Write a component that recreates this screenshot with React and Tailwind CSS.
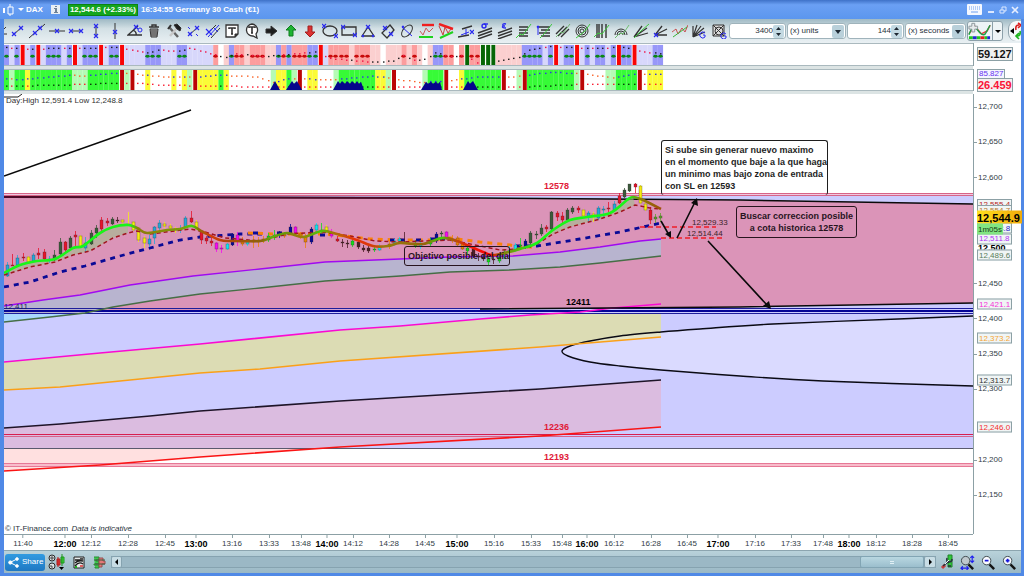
import clsx from 'clsx'

const PLOT = { x: 4, y: 94, w: 969, h: 440 }
const BAR = 5.23

const cellColors = {
  b: '#9797f9',
  l: '#d7d7fb',
  s: '#fc9d9d',
  p: '#fbcfcf',
  w: '#ffffff',
  r: '#f80505',
  g: '#056605',
}

const trendColors = {
  g: '#37fb37',
  l: '#b5fbb5',
  y: '#fbfb37',
  w: '#ffffff',
  r: '#bb0505',
}

const momentumCells =
  'blbrlbrlbbblbrlbbbrlbbr' +
  'llllbbblllbblllll' +
  'swpbsspsssppbsbsssbbrl' +
  'sssspsssppwpppspspwpbb' +
  'sswsgssgggppppp' +
  'bbbblbrlbbrlblbblbrbbrlllbb'

const trendCells =
  'glggyggggggggglllggggggr'.replace('ggggggggglll', 'gggggggglll') +
  'lrwwywwwwywylryyyygy' +
  'wwwwwwwwlyyglrwyywwwl' +
  'gggggggyylrwwwwwlgggrwwy' +
  'gggggggrwwlrggggggggglr' +
  'wwwwllggggrwyyy'

const momentumDots = [[0, 46], [3, 48], [22, 46], [23, 48], [27, 52], [29, 49], [33, 50], [35, 47], [40, 54], [42, 57], [44, 53], [50, 56], [59, 51], [62, 58], [66, 60], [70, 62], [74, 61], [76, 55], [78, 60], [80, 59], [82, 52], [85, 56], [88, 55], [90, 63], [94, 61], [98, 57], [100, 49], [104, 45], [112, 47], [118, 46], [121, 50], [125, 53]]
const trendTopDots = [[0, 78], [3, 79], [6, 77], [12, 74], [15, 75], [20, 72], [23, 72], [27, 74], [30, 76], [36, 76], [41, 74], [48, 76], [51, 82], [54, 78], [63, 79], [70, 75], [73, 77], [79, 82], [85, 80], [90, 76], [97, 76], [104, 71], [110, 72], [116, 77], [120, 73], [125, 73]]
const trendLowDots = [[0, 86], [10, 85], [20, 83], [25, 83], [30, 85], [50, 87], [70, 87], [99, 87], [110, 84], [125, 84]]

const upper = [[4, 306], [43, 300], [80, 295], [110, 289], [130, 285], [193, 276], [260, 269], [325, 262], [400, 259], [450, 257], [513, 256], [560, 252], [600, 247], [640, 241], [661, 239]]
const lower = [[4, 322], [50, 317], [85, 313], [113, 307], [150, 301], [200, 294], [260, 288], [325, 281], [400, 276], [450, 272], [510, 270], [560, 267], [600, 263], [661, 256]]
const magenta = [[4, 362], [100, 353], [200, 344], [340, 330], [400, 326], [480, 319], [530, 315], [580, 312], [613, 308], [661, 304]]
const orange = [[4, 390], [60, 387], [130, 380], [200, 373], [260, 369], [340, 361], [540, 347], [661, 337]]
const black = [[4, 428], [60, 424], [150, 416], [200, 411], [340, 401], [540, 389], [661, 380]]
const red = [[4, 471], [100, 465], [200, 457], [340, 447], [540, 436], [661, 427]]
const cone = [[973, 316], [898, 319], [773, 324], [700, 329], [661, 332], [620, 336], [590, 341], [570, 346], [562, 351], [568, 356], [590, 362], [620, 366], [661, 370], [740, 376], [823, 381], [973, 386]]

const average = [[4, 273], [20, 265], [37, 261], [55, 259], [73, 248], [83, 246], [100, 233], [113, 227], [128, 225], [137, 228], [147, 233], [167, 230], [180, 229], [192, 226], [203, 232], [220, 240], [233, 241], [260, 241], [270, 238], [287, 233], [303, 237], [322, 231], [337, 234], [357, 240], [373, 246], [388, 246], [400, 243], [423, 244], [442, 238], [457, 241], [483, 252], [495, 255], [523, 248], [537, 243], [553, 230], [570, 220], [587, 217], [610, 213], [627, 200], [633, 197], [643, 200], [661, 209]]
const averageStops = [[4, '#19f519'], [130, '#19f519'], [138, '#8c7d0a'], [182, '#7d9b0a'], [192, '#3cd70a'], [199, '#8c6e0a'], [210, '#d73c0a'], [225, '#b4460a'], [262, '#8c640a'], [272, '#5fb40a'], [284, '#64960a'], [300, '#a0780a'], [320, '#46c80a'], [332, '#a0780a'], [355, '#eb320a'], [372, '#d73c0a'], [385, '#967d0a'], [425, '#96640a'], [441, '#3cd70a'], [450, '#a0640a'], [468, '#eb1e0a'], [490, '#ff0000'], [500, '#966e0a'], [525, '#3cd70a'], [535, '#19f519'], [628, '#19f519'], [640, '#8c7d0a'], [661, '#a0500a']]
const signal = [[4, 275], [30, 267], [55, 262], [73, 255], [90, 251], [113, 238], [128, 233], [137, 231], [150, 234], [190, 229], [205, 232], [225, 238], [260, 241], [287, 234], [322, 232], [350, 236], [375, 241], [400, 242], [450, 240], [480, 246], [500, 250], [520, 249], [537, 244], [553, 234], [570, 227], [600, 219], [620, 212], [635, 205], [650, 208], [661, 209]]

const K = '#3c5a3c'
const R = '#e6142d'
const Y = '#f5eb14'
const B = '#28a5d7'
const N = '#0a0a96'
const M = '#f50af0'
const C = '#14e1f0'
const O = '#eb820a'
const G = '#14dc1e'
const D = '#501e28'

// x, high, low, body top, body bottom, colour
const candles = [
  [7, 262, 277, 265, 276, B], [12, 254, 266, 265, 266, R], [17, 255, 266, 258, 265, B], [23, 253, 261, 257, 258, R], [28, 256, 263, 257, 262, Y], [33, 253, 262, 255, 261, B], [38, 248, 259, 253, 255, R], [44, 249, 261, 252, 259, R], [49, 256, 263, 259, 260, B], [54, 250, 261, 255, 260, K], [60, 238, 255, 242, 254, K], [65, 241, 254, 242, 250, R], [70, 236, 249, 238, 248, K], [75, 231, 247, 235, 237, R], [80, 235, 248, 236, 247, Y], [85, 237, 252, 243, 248, B], [91, 230, 245, 233, 244, K], [96, 225, 238, 228, 233, K], [101, 217, 231, 220, 229, R], [107, 218, 226, 221, 223, R], [112, 217, 225, 219, 224, K], [117, 217, 223, 220, 221, D], [122, 219, 224, 220, 222, Y], [128, 212, 226, 224, 225, Y], [133, 221, 231, 222, 230, Y], [138, 227, 242, 228, 240, Y], [144, 236, 248, 238, 243, Y], [149, 235, 247, 239, 244, B], [154, 226, 244, 227, 238, B], [159, 220, 230, 223, 228, B], [164, 222, 228, 224, 226, Y], [170, 224, 230, 226, 228, Y], [175, 227, 233, 229, 230, Y], [180, 225, 233, 229, 230, B], [185, 216, 228, 218, 227, B], [191, 211, 223, 218, 222, R], [196, 220, 230, 222, 228, Y], [201, 230, 244, 231, 240, R], [206, 236, 244, 238, 241, R], [211, 238, 246, 241, 243, R], [216, 242, 252, 243, 249, M], [221, 245, 253, 248, 249, M], [227, 243, 250, 244, 249, C], [232, 233, 246, 234, 245, N], [237, 232, 246, 235, 241, M], [242, 237, 246, 240, 244, O], [247, 240, 246, 242, 244, C], [253, 236, 248, 240, 242, O], [258, 237, 247, 240, 242, O],
  [263, 236, 243, 239, 240, O], [268, 233, 242, 236, 240, G], [274, 230, 240, 235, 236, G], [279, 231, 238, 232, 234, N], [284, 232, 238, 234, 236, O], [290, 224, 234, 227, 233, N], [295, 226, 234, 227, 233, M], [300, 232, 239, 234, 237, O], [305, 234, 248, 237, 242, O], [311, 227, 244, 229, 242, N], [316, 223, 231, 225, 230, C], [321, 223, 233, 230, 231, G], [326, 225, 233, 227, 231, Y], [331, 229, 238, 233, 236, M], [337, 236, 242, 239, 241, R], [342, 239, 247, 242, 243, D], [347, 240, 248, 243, 244, D], [352, 238, 247, 241, 245, G], [358, 240, 249, 242, 247, D], [363, 245, 252, 248, 250, D], [368, 246, 253, 248, 251, D], [374, 246, 252, 249, 250, G], [379, 244, 251, 247, 250, C], [389, 241, 249, 244, 245, O], [394, 239, 246, 241, 244, C], [399, 237, 244, 239, 241, C], [404, 232, 244, 242, 243, D], [415, 240, 248, 243, 246, G], [420, 240, 249, 244, 246, C], [430, 238, 246, 241, 244, G], [436, 232, 243, 234, 241, N], [441, 231, 240, 233, 234, K], [446, 231, 240, 232, 238, M], [452, 235, 243, 239, 241, O], [457, 236, 246, 238, 245, O], [462, 242, 250, 243, 249, O], [467, 244, 254, 248, 251, G], [473, 247, 258, 249, 256, D], [478, 253, 261, 256, 257, D], [483, 254, 261, 257, 259, D], [488, 256, 265, 259, 262, G], [493, 254, 264, 259, 260, D], [499, 253, 263, 257, 261, G],
  [504, 249, 259, 252, 254, G], [509, 246, 256, 250, 252, C], [515, 243, 252, 245, 250, C], [520, 238, 250, 245, 246, G], [525, 239, 249, 241, 247, N], [530, 231, 245, 233, 243, K], [536, 231, 239, 234, 235, K], [541, 224, 236, 228, 234, K], [546, 225, 232, 227, 229, R], [551, 211, 230, 212, 229, K], [557, 211, 221, 213, 217, R], [562, 212, 225, 216, 220, R], [567, 208, 222, 210, 220, K], [572, 206, 214, 208, 212, K], [578, 206, 213, 208, 210, R], [583, 209, 218, 210, 216, Y], [588, 211, 222, 213, 217, B], [593, 212, 222, 214, 216, Y], [598, 206, 220, 208, 218, B], [603, 206, 217, 209, 210, B], [608, 202, 212, 208, 209, R], [614, 201, 212, 204, 210, B], [619, 193, 204, 196, 203, R], [624, 188, 198, 190, 197, K], [629, 184, 192, 184, 191, K], [635, 183, 193, 184, 187, R], [640, 185, 204, 186, 203, Y], [645, 202, 211, 204, 210, Y], [650, 207, 224, 210, 220, R], [655, 214, 223, 217, 219, '#5fa02d'], [660, 213, 222, 216, 218, '#5fa02d'],
]

const priceTicks = [12700, 12650, 12600, 12450, 12400, 12350, 12300, 12200, 12150]

const priceTags = [
  { y: 228, text: '12,528.8', color: 'text-[#1e1ec8]' },
  { y: 239, text: '12,511.8', color: 'text-[#b432f5]' },
  { y: 255, text: '12,489.6', color: 'text-[#5a7d5a]' },
  { y: 304, text: '12,421.1', color: 'text-[#f532d7]' },
  { y: 338, text: '12,373.2', color: 'text-[#f5a532]' },
  { y: 380, text: '12,313.7', color: 'text-[#323232]' },
  { y: 427, text: '12,246.0', color: 'text-[#f52d2d]' },
]

const timeTicks = [
  [23, '11:40'], [65, '12:00', true], [91, '12:12'], [128, '12:28'], [165, '12:45'], [196, '13:00', true], [232, '13:16'], [269, '13:33'], [301, '13:48'], [327, '14:00', true], [353, '14:12'], [389, '14:28'], [425, '14:45'], [457, '15:00', true], [494, '15:16'], [531, '15:33'], [562, '15:48'], [587, '16:00', true], [614, '16:12'], [651, '16:28'], [687, '16:45'], [718, '17:00', true], [755, '17:16'], [791, '17:33'], [823, '17:48'], [849, '18:00', true], [876, '18:12'], [912, '18:28'], [948, '18:45'],
]

function line(points) {
  return 'M' + points.map((p) => p.join(' ')).join('L')
}

function band(top, bottom) {
  return line([...top, ...[...bottom].reverse()]) + 'Z'
}

function smooth(points) {
  let d = `M${points[0][0]} ${points[0][1]}`
  for (let i = 0; i < points.length - 1; i++) {
    const a = points[i - 1] || points[i]
    const b = points[i]
    const c = points[i + 1]
    const e = points[i + 2] || c
    d += `C${b[0] + (c[0] - a[0]) / 6} ${b[1] + (c[1] - a[1]) / 6} ${c[0] - (e[0] - b[0]) / 6} ${c[1] - (e[1] - b[1]) / 6} ${c[0]} ${c[1]}`
  }
  return d
}

function valueAt(points, i) {
  const next = points.findIndex((p) => p[0] >= i)
  if (next <= 0) return points[0][1]
  const [x0, y0] = points[next - 1]
  const [x1, y1] = points[next]
  return Math.round(y0 + ((y1 - y0) * (i - x0)) / (x1 - x0))
}

function left(x) {
  return `${((x - PLOT.x) / PLOT.w) * 100}%`
}

function top(y) {
  return `${((y - PLOT.y) / PLOT.h) * 100}%`
}

function priceY(price) {
  return 107 + ((12700 - price) * 35.3) / 50
}

const Cross = ({ x, y, s = 2 }) => (
  <path d={`M${x - s} ${y - s}l${s * 2} ${s * 2}M${x - s} ${y + s}l${s * 2} ${-s * 2}`} stroke="#2a2af0" strokeWidth="1.2" />
)

const tools = [
  ['Segment', <><path d="M3 12L12 4" /><Cross x={4} y={11} /><Cross x={11} y={5} /></>],
  ['Line', <><path d="M0 15L16 1" /><Cross x={6} y={10} /><Cross x={11} y={5} /></>],
  ['Horizontal line', <><path d="M0 8H16" /><Cross x={8} y={8} /></>],
  ['Horizontal segment', <><path d="M3 8H13" /><Cross x={3} y={8} /><Cross x={13} y={8} /></>],
  ['Vertical segment', <><path d="M8 3V13" /><Cross x={8} y={3} /><Cross x={8} y={13} /></>],
  ['Vertical line', <><path d="M8 0V16" /><Cross x={8} y={9} /></>],
  ['Angle', <><path d="M11 3L1 12H15M6 7Q10 9 9 12" strokeWidth="1.3" /><Cross x={9} y={4} /><circle cx="13" cy="7" r="2" stroke="#2a2af0" /></>],
  ['Delete', <><path d="M3 4h10M6 4V2h4v2" strokeWidth="1.4" /><path d="M4 6l1 8h6l1-8z" fill="#b4b4b4" /><path d="M6 7v6M8 7v6M10 7v6" /></>],
  ['Settings', <><path d="M3 4l9 10" stroke="#646464" strokeWidth="2.5" /><path d="M12 4L4 13" stroke="#c8c8c8" strokeWidth="2.5" /><path d="M8 2l3-1 4 4-1 3-3-2z" fill="#1e1e1e" /><path d="M2 6l3-4" strokeWidth="2" /></>],
  ['Trend', <><path d="M4 12L12 5" /><path d="M3 4l2 2M11 11l2 2" stroke="#2a2af0" /><Cross x={5} y={11} /><Cross x={12} y={5} /></>],
  ['Channel', <><path d="M1 12L11 2M6 15L15 5" /><Cross x={4} y={9} s={3} /><path d="M3 14L14 2M9 5l4 4" stroke="#2a2af0" /></>],
  ['Text', <><path d="M2 2h12v9l-3 3H2z" fill="#fff" strokeWidth="1.3" /><path d="M14 11h-3v3z" fill="#333" /><path d="M5 6V5h6v1M8 5v6M7 11h2" strokeWidth="1.6" /></>],
  ['Callout', <><path d="M8 1a6 6 0 1 0 1 12l4 2-1-4A6 6 0 0 0 8 1z" fill="#fff" strokeWidth="1.3" /><path d="M5 5V4h6v1M8 4v6M7 10h2" strokeWidth="1.6" /></>],
  ['Right arrow', <path d="M3 6h5V3l6 5-6 5v-3H3z" fill="#1e1e1e" />],
  ['Up arrow', <path d="M8 2l5 5h-3v6H6V7H3z" fill="#1eb432" stroke="#0f7d1e" />],
  ['Down arrow', <path d="M8 14l5-5h-3V3H6v6H3z" fill="#dc3232" stroke="#a01e1e" />],
  ['Ellipse', <><ellipse cx="8" cy="8" rx="7" ry="5" strokeWidth="1.3" /><Cross x={2} y={3} /><Cross x={14} y={13} /></>],
  ['Rectangle', <><path d="M1 4H15V12H1z" strokeWidth="1.3" /><Cross x={2} y={4} /><Cross x={14} y={12} /></>],
  ['Triangle', <><path d="M8 4L2 13H14z" strokeWidth="1.3" /><Cross x={8} y={4} /><Cross x={3} y={13} s={1} /><Cross x={13} y={13} s={1} /></>],
  ['Tilted rectangle', <><path d="M10 2l4 5-7 8-5-5z" strokeWidth="1.3" /><Cross x={5} y={5} /><Cross x={11} y={11} /></>],
  ['Tilted ellipse', <><ellipse cx="8" cy="8" rx="7" ry="4" transform="rotate(-50 8 8)" /><path d="M3 4l10 9" stroke="#2a2af0" /><Cross x={4} y={4} s={1} /></>],
  ['Support and resistance', <><path d="M3 2H15" stroke="#f01e1e" strokeWidth="2.4" /><path d="M0 14H14" stroke="#1ed21e" strokeWidth="2" /><path d="M1 8l3 4 3-7 3 4 4-4" stroke="#c85a5a" /></>],
  ['Auto channel', <><path d="M1 1L15 6" stroke="#f01e1e" strokeWidth="2.4" /><path d="M2 15L15 9" stroke="#1ed21e" strokeWidth="2" /><path d="M1 3l4 9 2-8 3 6 3-4" stroke="#c83c3c" /></>],
  ['Fork', <><path d="M4 6L14 3M0 14L11 12" strokeWidth="1.4" /><path d="M8 6v6M3 12l8-3" stroke="#2a2af0" /><Cross x={14} y={9} /></>],
  ['Standard deviation', <><path d="M1 10L15 5M1 13L15 8M1 16L15 11" strokeWidth="1.4" /><circle cx="7" cy="3" r="2" stroke="#2a2af0" strokeWidth="1.4" /><path d="M7 1h4" stroke="#2a2af0" strokeWidth="1.4" /></>],
  ['Standard error', <><path d="M1 10L15 5M1 13L15 8M1 16L15 11" strokeWidth="1.4" /><path d="M9 1Q5 0 6 3Q4 5 9 5M6 3h2" stroke="#2a2af0" strokeWidth="1.3" /></>],
  ['Fibonacci retracement', <><path d="M3 4H12M3 7H12M3 10H12M3 13H12" strokeWidth="1.4" /><path d="M0 15l4-4 3 1 8-11" stroke="#3cc83c" /></>],
  ['Fibonacci extension', <><path d="M3 4H14M5 7H14M3 10H14M5 13H14" strokeWidth="1.4" /><path d="M2 4V12" stroke="#2a2af0" /><Cross x={2} y={4} s={1} /><path d="M4 15l4-4 8-10" stroke="#3cc83c" /></>],
  ['Fibonacci channel', <><path d="M1 11L9 3M3 13L12 4M6 14L14 6" strokeWidth="1.4" /><path d="M1 14l5-5 2 1 7-9" stroke="#6eb46e" /></>],
  ['Spiral', <><circle cx="7" cy="8" r="6" /><circle cx="7" cy="8" r="4" /><circle cx="7" cy="8" r="2" /><path d="M1 15l4-3 5-4 5-7" stroke="#3cc83c" /></>],
  ['Time zones', <><path d="M3 1V15M5 1V15M8 1V15M12 1V15" strokeWidth="1.4" /><path d="M0 14l4-4 4 1 7-9" stroke="#3cc83c" /></>],
  ['Fibonacci arcs', <><path d="M1 12a6 6 0 0 1 12 0M3 12a4 4 0 0 1 8 0M5 12a2 2 0 0 1 4 0" /><path d="M1 15l5-5 3 1 6-9" stroke="#6ebe6e" /></>],
  ['Fibonacci fan', <><path d="M1 14L9 3M1 14L14 5M1 14L15 10" strokeWidth="1.3" /><path d="M1 15l7-7 8-7" stroke="#3cc83c" /></>],
  ['Fan', <><path d="M3 12L10 3M3 12L15 6M3 12H15" strokeWidth="1.3" /><Cross x={4} y={12} /></>],
  ['Pattern', <><path d="M0 9l4-3 2 5 4-6 3 4 3-7" stroke="#c85050" /><path d="M1 14L15 4" stroke="#3cb43c" /></>],
  ['Gann fan', <><path d="M2 14V3M2 14L6 2M2 14L10 3M2 14L13 5M2 14L14 9" strokeWidth="1.2" /><path d="M14 10a3 3 0 1 0 0 4v-2h-2" stroke="#2a2af0" /></>],
  ['Gann square', <><path d="M2 2H13V13H2zM2 2L13 13M13 2L2 13" fill="#dcdcdc" /><circle cx="8" cy="8" r="4" /><path d="M15 11a3 3 0 1 0 0 4v-2h-2" stroke="#2a2af0" /></>],
]

const TitleBar = () => (
  <header className="h-[19px] shrink-0 flex items-center justify-between pl-[3px] pr-[5px] bg-gradient-to-b from-[#3f72c8] via-[#6ba0f4] via-25% to-[#5b96ee] text-white font-bold">
    <div className="flex items-center">
      <svg className="w-3 h-3 mr-[3px]" viewBox="0 0 12 12" fill="none" stroke="#fff">
        <path d="M1 4V9M0 6H2" strokeWidth="2" />
        <path d="M5 3H10V10H5zM7 0V3M7 10V12" />
      </svg>
      <svg className="w-[6px] h-[3px] mr-[2px]" viewBox="0 0 6 3" fill="#fff"><path d="M0 0H6L3 3z" /></svg>
      <h1>DAX</h1>
      <button type="button" title="Information" className="ml-2 mr-2 w-[9px] h-[9px] bg-[#e8eef4]">
        <svg viewBox="0 0 9 9" fill="#6e8296"><path d="M4 1h2v1H4zM3 3h3v4h1v1H3V7h1V4H3z" /></svg>
      </button>
      <span className="h-3 px-px mr-[3px] flex items-center bg-[#14a51e] border border-[#0a8214]">12,544.6 (+2.33%)</span>
      <span>16:34:55 Germany 30 Cash (€1)</span>
    </div>
    <div className="flex items-center gap-1">
      <button type="button" title="Keyboard" className="mr-px">
        <svg className="w-[15px] h-[11px]" viewBox="0 0 15 11">
          <rect width="15" height="11" rx="1" fill="#f5f8ff" />
          <path d="M2 3H13M2 5H13" stroke="#6ea0f0" strokeWidth="1" strokeDasharray="1 1" />
          <path d="M4 8H11" stroke="#6ea0f0" />
        </svg>
      </button>
      <button type="button" title="Minimize">
        <svg className="w-2 h-2" viewBox="0 0 8 8" stroke="#dce8ff" strokeWidth="2"><path d="M1 6H7" /></svg>
      </button>
      <button type="button" title="Restore">
        <svg className="w-2 h-2" viewBox="0 0 8 8" fill="none" stroke="#dce8ff"><path d="M3 4V1H7V5H5M1 4H5V7H1z" /></svg>
      </button>
      <button type="button" title="Close">
        <svg className="w-2 h-2" viewBox="0 0 8 8" stroke="#e6eeff" strokeWidth="1.6"><path d="M1 1L7 7M7 1L1 7" /></svg>
      </button>
    </div>
  </header>
)

const Stepper = ({ label, value }) => (
  <div className="w-[57px] h-4 flex items-center bg-white border border-[#9fb3bb] rounded-[3px] pr-px">
    <input aria-label={label} defaultValue={value} className="min-w-0 flex-1 text-right outline-none" />
    <button type="button" title={`Change ${label}`} className="w-[11px] h-[13px] bg-[#c3d9e2] rounded-[2px]">
      <svg viewBox="0 0 11 13" fill="#1e2832"><path d="M3 5L5.500 2L8 5zM3 8L5.500 11L8 8z" /></svg>
    </button>
  </div>
)

const Picker = ({ label, value, className }) => (
  <div className={clsx('h-4 relative flex items-center bg-white border border-[#9fb3bb] rounded-[3px]', className)}>
    <select aria-label={label} className="w-full h-full pl-[2px] appearance-none outline-none">
      <option>{value}</option>
    </select>
    <span className="absolute right-px w-3 h-[13px] bg-[#b9d0da] rounded-[2px] pointer-events-none">
      <svg viewBox="0 0 12 13" fill="#1e2832"><path d="M3 5H9L6 9z" /></svg>
    </span>
  </div>
)

const Toolbar = () => (
  <div className="h-6 shrink-0 flex items-center bg-gradient-to-b from-[#9fb9c4] via-[#d3e0e5] via-40% to-[#e9f0f3] text-[#28323c]">
    <svg className="w-1 h-4 shrink-0" viewBox="0 0 4 16" stroke="#333"><path d="M0 11H3M0 6l2-2" /></svg>
    <div className="flex-1 flex justify-between pl-[2px] pr-[2px]">
      {tools.map(([name, icon]) => (
        <button key={name} type="button" title={name} className="w-4 h-4 cursor-pointer">
          <svg viewBox="0 0 16 16" fill="none" stroke="#333" strokeWidth="1">{icon}</svg>
        </button>
      ))}
    </div>
    <div className="shrink-0 flex items-center gap-px">
      <Stepper label="unit count" value="3400" />
      <Picker label="Unit type" value="(x) units" className="w-[59px]" />
      <Stepper label="interval" value="144" />
      <Picker label="Interval type" value="(x) seconds" className="w-[61px]" />
      <button type="button" title="Indicators" className="h-[20px] flex items-center bg-[#eef4f6] border border-[#8ca0aa] rounded-[3px]">
        <svg className="w-[25px] h-[18px] border-r border-[#8ca0aa]" viewBox="0 0 25 18" fill="none">
          <path d="M1 12L7 4L14 12L20 9L23 3" stroke="#e63c3c" strokeWidth="1.5" />
          <path d="M1 13Q5 1 10 8T18 12L23 3" stroke="#1ea046" strokeWidth="1.5" />
          <path d="M4 1h3v3h3v3H7v3H4V7H1V4h3z" fill="#e6eaec" stroke="#8c969b" />
          <path d="M1 16h4M9 16h4M17 16h3" stroke="#1ec81e" strokeWidth="3" />
          <path d="M5 16h4M20 16h3" stroke="#1e28d2" strokeWidth="3" />
          <path d="M13 16h4" stroke="#e61e1e" strokeWidth="3" />
        </svg>
        <svg className="w-[9px] h-[18px]" viewBox="0 0 9 18" fill="#000"><path d="M2 8H8L5 11z" /></svg>
      </button>
      <button type="button" title="Orders" className="ml-1 w-[13px] h-[20px] bg-[#f5f8fa] border-l border-[#8ca0aa] rounded-l-[8px]">
        <svg viewBox="0 0 12 20" fill="none">
          <path d="M5 7L1 10L5 13z" fill="#000" />
          <path d="M7 9Q6 4 10 4M9 2l3 2-3 3" stroke="#dc1e1e" strokeWidth="1.6" />
          <path d="M11 10Q12 15 8 15M10 12l-3 3 3 3" stroke="#1eb41e" strokeWidth="1.6" />
        </svg>
      </button>
    </div>
  </div>
)

const Cells = ({ cells, colors, y, height }) =>
  cells.split('').map((c, i) => {
    const narrow = c === 'r' || (c === 'g' && colors === cellColors)
    return <rect key={i} x={4 + i * BAR + (narrow ? 1 : 0)} y={y} width={narrow ? 4 : BAR + 0.1} height={height} fill={colors[c]} />
  })

const MomentumPanel = () => (
  <svg className="block w-full h-full" viewBox="4 43 969 23" preserveAspectRatio="none">
    <Cells cells={momentumCells} colors={cellColors} y={44} height={22} />
    {momentumCells.split('').map((c, i) => {
      const x = Math.round(4 + i * BAR + 2)
      return (
        <g key={i}>
          {(c === 'b' || c === 's') && <ellipse cx={x + 0.5} cy="56.5" rx="2.2" ry="1.6" fill={c === 'b' ? '#0a8714' : '#c80a0a'} />}
          {c !== 'r' && c !== 'g' && <rect x={x} y={valueAt(momentumDots, i)} width="1.500" height="1.500" fill={c === 'l' || c === 's' ? '#f01446' : '#1e1e1e'} />}
        </g>
      )
    })}
  </svg>
)

const TrendPanel = () => (
  <svg className="block w-full h-full" viewBox="4 69 969 22" preserveAspectRatio="none">
    <Cells cells={trendCells} colors={trendColors} y={69} height={22} />
    {trendCells.split('').map((c, i) => {
      const x = Math.round(4 + i * BAR + 2)
      return (
        c !== 'r' && (
          <g key={i}>
            <rect x={x} y={valueAt(trendTopDots, i)} width="1.500" height="1.500" fill={c === 'g' || c === 'y' ? '#3232e6' : '#fa6428'} />
            <rect x={x} y={valueAt(trendLowDots, i)} width="1.500" height="1.500" fill={c === 'g' ? '#0a3c0a' : '#fa1e32'} />
          </g>
        )
      )
    })}
    <path d="M270 91L275 81L280 91zM286 91L292 81L294 84L297 81L302 91zM333 91L338 81L340 84L342 81L345 84L347 81L350 84L352 81L355 84L357 81L359 84L361 82L364 91zM421 91L426 82L428 84L431 82L433 84L436 82L438 84L440 82L442 91zM463 91L468 81L470 84L473 81L478 91z" fill="#05058c" />
  </svg>
)

const PriceChart = () => (
  <svg className="absolute inset-0 w-full h-full" viewBox="4 94 969 440" preserveAspectRatio="none" fill="none">
    <defs>
      <linearGradient id="average" gradientUnits="userSpaceOnUse" x1="4" y1="0" x2="661" y2="0">
        {averageStops.map(([x, color]) => (
          <stop key={x} offset={(x - 4) / 657} stopColor={color} />
        ))}
      </linearGradient>
      <clipPath id="aboveZone"><rect x="4" y="94" width="969" height="219" /></clipPath>
      <clipPath id="belowZone"><rect x="4" y="313" width="969" height="221" /></clipPath>
      <clipPath id="insideZone"><rect x="4" y="313" width="969" height="136" /></clipPath>
      <clipPath id="underZone"><rect x="4" y="449" width="969" height="90" /></clipPath>
    </defs>

    {/* zones */}
    <rect x="4" y="193" width="969" height="256" fill="#ccccff" />
    <path d="M4 197L480 198L740 200L973 204V303L740 307L480 309L4 311z" fill="#db94b8" />
    <path d={band(upper, lower)} fill="#b8b4cf" clipPath="url(#aboveZone)" />
    <path d="M4 313V322L50 317L82 313z" fill="#aad8ff" />
    <path d={band(magenta, orange)} fill="#dcdcb4" clipPath="url(#belowZone)" />
    <path d={band(black, red)} fill="#dbbce0" clipPath="url(#insideZone)" />
    <path d={band(black, red)} fill="#ffe0e0" clipPath="url(#underZone)" />
    <path d={smooth(cone)} fill="#fff" fillOpacity="0.27" stroke="#0a0a14" strokeWidth="1.400" />

    {/* horizontal levels */}
    <path d="M4 195H973" stroke="#f0c8e1" strokeWidth="2" />
    <path d="M4 193.500H973M4 195.500H973" stroke="#d76487" />
    <path d="M4 308.500H973M4 313.500H973" stroke="#1e1e9b" />
    <path d="M4 311H973" stroke="#050596" strokeWidth="2.200" />
    <path d="M4 434.500H973" stroke="#d71e50" />
    <path d="M4 436.500H973" stroke="#d7648c" />
    <path d="M4 448.500H973" stroke="#5a5a6e" />
    <path d="M4 465H973" stroke="#f8bccb" strokeWidth="3" />
    <path d="M4 463.500H973M4 466.500H973" stroke="#e67896" />

    {/* bands */}
    <path d={line(upper)} stroke="#a00af0" strokeWidth="1.400" />
    <path d={line(lower)} stroke="#466e46" strokeWidth="1.400" />
    <path d={line(magenta)} stroke="#fa0ad2" strokeWidth="1.600" />
    <path d={line(orange)} stroke="#faa019" strokeWidth="1.600" />
    <path d={line(black)} stroke="#1e1428" strokeWidth="1.600" />
    <path d={line(red)} stroke="#fa1414" strokeWidth="1.600" />

    {/* trend lines */}
    <path d="M4 176L191 110" stroke="#0a0a0a" strokeWidth="1.600" />
    <path d="M4 197L480 198L740 200L973 204" stroke="#0a0a0a" strokeWidth="1.500" />
    <path d="M4 197L480 198" stroke="#500a28" strokeWidth="2" />
    <path d="M480 309L740 307L973 303" stroke="#0a0a0a" strokeWidth="1.500" />
    <path d="M4 97H18L22 94" stroke="#1e1e1e" />

    {/* averages and candles */}
    <path d={band(average.slice(0, 9), signal.slice(0, 7))} fill="#a0be8c" fillOpacity="0.6" />
    <path d={band(average.slice(32, 40), signal.slice(22, 28))} fill="#a0be8c" fillOpacity="0.6" />
    <path d="M4 287L30 282L60 272L85 266L120 256L150 248L180 240L200 237L240 234H262" stroke="#0a0a96" strokeWidth="2.800" strokeDasharray="5 5" />
    <path d="M248 233L275 234H325L345 236L370 239L400 240H430L450 238L480 242L510 245L520 247H532" stroke="#fa820a" strokeWidth="3" strokeDasharray="5 5" />
    <path d="M253 233h5M277 233h5M320 235h5M390 240h5M400 240h5M416 240h5M430 239h5M440 239h5" stroke="#0a0a96" strokeWidth="3" />
    <path d="M516 246L537 246L580 239L620 232L661 223" stroke="#0a0a96" strokeWidth="2.800" strokeDasharray="5 5" />
    {candles.map(([x, high, low, open, close, color]) => (
      <g key={x} stroke={color}>
        <path d={`M${x + 0.5} ${high}V${low}`} strokeOpacity="0.8" />
        <rect x={x - 1} y={open} width="3" height={Math.max(close - open, 1)} fill={color} stroke="#28281e" strokeOpacity="0.4" strokeWidth="0.700" />
      </g>
    ))}
    <path d={line(signal)} stroke="#a0141e" strokeWidth="1.500" strokeDasharray="4 3" />
    <path d={smooth(average)} stroke="url(#average)" strokeWidth="2.700" />

    {/* forecast */}
    <path d="M640 227H716M661 238H724" stroke="#f01e28" strokeWidth="1.300" strokeDasharray="5 3" />
    <path d="M661 221L669 235M677 238L695 202M708 241L767 305" stroke="#0a0a0a" strokeWidth="1.600" />
    <path d="M671 238L665 234L671 231zM697 198L691 203L698 206zM771 309L763 306L769 301z" fill="#0a0a0a" />
  </svg>
)

const levels = [
  [544, 186, '12578', 'text-[#e11937] font-bold text-[9px]'],
  [566, 302, '12411', 'text-black font-bold text-[9px]'],
  [544, 427, '12236', 'text-[#e11937] font-bold text-[9px]'],
  [544, 457, '12193', 'text-[#e11937] font-bold text-[9px]'],
  [4, 307, '12,411', 'text-[#1e1e5a]'],
  [692, 223, '12,529.33', 'text-[#3c1e28]'],
  [687, 234, '12,514.44', 'text-[#3c1e28]'],
]

const noteText = 'absolute py-[3px] pl-[3px] text-[9px] leading-3 font-bold border rounded-[3px] whitespace-nowrap'

const Annotations = () => (
  <>
    {levels.map(([x, y, text, className]) => (
      <span key={text} className={clsx('absolute -translate-y-1/2', className)} style={{ left: left(x), top: top(y) }}>{text}</span>
    ))}
    <p className={clsx(noteText, 'text-[#1e1e1e] border-[#1e1e1e] border-b-0')} style={{ left: left(661), top: top(140) }}>
      Si sube sin generar nuevo maximo<br />
      en el momento que baje a la que haga<br />
      un minimo mas bajo zona de entrada<br />
      con SL en 12593
    </p>
    <p className={clsx(noteText, 'pr-[3px] text-center text-[#28141e] border-[#28141e]')} style={{ left: left(736), top: top(206) }}>
      Buscar correccion posible<br />
      a cota historica 12578
    </p>
    <p className={clsx(noteText, 'text-[#28141e] border-[#28141e]')} style={{ left: left(404), top: top(246) }}>
      Objetivo posible del dia
    </p>
    <p className="absolute top-[2px] left-[2px] text-[#323232]">Day:High 12,591.4 Low 12,248.8</p>
    <p className="absolute bottom-0 left-px text-[#28323c]">
      © IT-Finance.com <i className="ml-px">Data is indicative</i>
    </p>
  </>
)

const tagBox = 'absolute left-[3px] px-px flex bg-[#f0f5f5] border border-[#8ca0a5]'

const PriceAxis = () => (
  <div className="relative w-12 shrink-0 bg-white border-l border-[#8ca0a5]">
    {priceTicks.map((price) => (
      <span key={price} className="absolute left-0 -translate-y-1/2 flex items-center text-[#323c46]" style={{ top: top(priceY(price)) }}>
        <i className="w-[3px] h-px mr-px bg-[#8ca0a5]" />
        {price.toLocaleString('en-US')}
      </span>
    ))}
    <span className="absolute left-1 -translate-y-1/2 font-bold text-[9px] text-black" style={{ top: top(248) }}>12,500</span>
    <span className={clsx(tagBox, 'h-[7px] overflow-hidden border-b-0 text-[#b91c1c]')} style={{ top: top(199) }}>12,555.4</span>
    <span className={clsx(tagBox, 'h-[7px] overflow-hidden border-b-0 text-[#b9782d]')} style={{ top: top(205) }}>12,554.7</span>
    {priceTags.map((tag) => (
      <span key={tag.text} className={clsx(tagBox, 'h-[11px] items-center -translate-y-1/2', tag.color)} style={{ top: top(tag.y) }}>{tag.text}</span>
    ))}
    <span className="absolute left-[3px] -translate-y-1/2 h-[13px] w-[45px] flex items-center bg-gradient-to-r from-[#ffe11e] to-[#f0aa0a] font-bold text-[11px] text-black" style={{ top: top(217) }}>
      12,544.9
    </span>
    <span className="absolute left-[3px] -translate-y-1/2 h-[11px] px-px flex items-center bg-[#82e682] text-[#143c14]" style={{ top: top(229) }}>1m05s</span>
  </div>
)

const IndicatorRow = ({ className, children, tags }) => (
  <div className={clsx('shrink-0 flex', className)}>
    <div className="flex-1 min-w-0 border-y border-[#aab9be] bg-white">{children}</div>
    <div className="relative w-12 shrink-0 bg-white border-l border-[#8ca0a5]">{tags}</div>
  </div>
)

const Divider = () => (
  <div className="h-[3px] shrink-0 flex bg-white">
    <div className="flex-1 bg-[#dce4e4]" />
    <div className="w-12" />
  </div>
)

const TimeAxis = () => (
  <div className="h-4 shrink-0 flex bg-white text-[#323c46]">
    <div className="relative flex-1 border-t border-[#8ca0a5]">
      {timeTicks.map(([x, text, bold]) => (
        <span
          key={text}
          className={clsx('absolute top-0 -translate-x-1/2 flex flex-col items-center', bold && 'font-bold text-[9px] text-black')}
          style={{ left: left(x) }}
        >
          <i className="w-px h-[3px] mb-px bg-[#8ca0a5]" />
          {text}
        </span>
      ))}
    </div>
    <div className="w-12" />
  </div>
)

const BottomBar = () => (
  <footer className="h-[23px] shrink-0 flex items-center pl-px pr-1 bg-gradient-to-b from-[#b9d2da] to-[#9ab8c5] border-t border-[#8ca5af]">
    <button type="button" className="w-10 h-[17px] flex items-center gap-[3px] pl-[3px] rounded-[3px] bg-gradient-to-b from-[#329be1] to-[#1e78c3] text-white cursor-pointer">
      <svg className="w-[11px] h-[11px] shrink-0" viewBox="0 0 11 11" fill="#fff" stroke="#fff">
        <path d="M9 2L2 5.500L9 9" fill="none" />
        <circle cx="9" cy="2" r="1.300" /><circle cx="2.300" cy="5.500" r="1.600" /><circle cx="9" cy="9" r="1.300" />
      </svg>
      <span>Share</span>
    </button>
    <button type="button" title="Buy or sell" className="ml-[3px] w-[18px]">
      <svg viewBox="0 0 18 16" fill="none" stroke="#282828">
        <circle cx="4" cy="4" r="3" fill="#dce1e4" /><circle cx="4" cy="12" r="3" fill="#dce1e4" />
        <path d="M3 3H5V5H3zM3 11V13H5" strokeWidth="0.800" />
        <path d="M9 5H12V11H9zM10 3V13" fill="#e63c3c" stroke="#b41e1e" /><path d="M13 3H16V9H13zM14 0V12" fill="#3cdc3c" stroke="#1e961e" />
        <path d="M11 13H16L13.500 16z" fill="#000" stroke="none" />
      </svg>
    </button>
    <button type="button" title="Order list" className="ml-[7px] w-3">
      <svg viewBox="0 0 12 13" fill="none" stroke="#1e1e1e"><path d="M1 1H11V12H1z" fill="#e6ebeb" /><path d="M2 4H7M2 7Q5 4 10 5M2 10Q6 5 10 8M7 3H10" strokeWidth="1.400" /><path d="M2 11h2" stroke="#1eb41e" strokeWidth="2" /><path d="M7 10h3" stroke="#dc3232" strokeWidth="1.500" /></svg>
    </button>
    <button type="button" title="Market depth" className="ml-[8px] w-[13px]">
      <svg viewBox="0 0 13 13" fill="none"><path d="M1 1H6V4H3V5H6V8H1V9H6V12H2V11" fill="#3cc850" stroke="#288c32" /><path d="M6 2H10V5H12V8H9V11H6z" fill="#e67878" stroke="#965050" /><path d="M1 4H12M2 8H12" stroke="#3c5a3c" /></svg>
    </button>
    <div className="ml-[5px] flex-1 h-3 flex items-center bg-[#9bb8c5] border-y border-[#86a3b0]">
      <button type="button" title="Scroll left" className="w-[11px] h-3 bg-[#c8dde5] border border-[#86a3b0] rounded-[2px]">
        <svg viewBox="0 0 9 10" fill="#000"><path d="M6 2L3 5L6 8z" /></svg>
      </button>
      <div className="flex-1" />
      <div className="w-16 h-3 flex items-center justify-center bg-gradient-to-b from-[#b9d7e1] to-[#9bbecd] border border-[#82a5b4] rounded-[2px]">
        <i className="w-1 h-[3px] border-y border-[#e1f0f5]" />
      </div>
      <button type="button" title="Scroll right" className="w-3 h-3 bg-[#c8dde5] border border-[#86a3b0] rounded-[2px]">
        <svg viewBox="0 0 10 10" fill="#000"><path d="M4 2L7 5L4 8z" /></svg>
      </button>
    </div>
    <div className="flex items-center gap-[6px] pl-1">
      <button type="button" title="Chart settings" className="w-[14px]">
        <svg viewBox="0 0 14 16" fill="none"><path d="M8 1H12V13H8z" fill="#32c83c" stroke="#1e8228" /><path d="M2 14L5 11" stroke="#c83c3c" strokeWidth="3" /><path d="M3 12L9 7M7 4Q6 9 9 8Q12 8 12 5M8 12h3" stroke="#28323c" strokeWidth="1.500" /><path d="M5 10L9 6" stroke="#f0f5f5" /></svg>
      </button>
      {[
        ['Fit zoom', <path key="f" d="M13 1V8M1 14H9M11 3l2-2 2 2M11 6l2 2 2-2M3 12l-2 2 2 2M7 12l2 2-2 2" stroke="#1e1ef0" strokeWidth="1.200" />],
        ['Zoom out', <path key="o" d="M4 6H8" stroke="#1414dc" strokeWidth="1.800" />],
        ['Zoom in', <path key="i" d="M4 6H8M6 4V8" stroke="#1414dc" strokeWidth="1.800" />],
      ].map(([name, mark], i) => (
        <button key={name} type="button" title={name} className="w-[15px] h-[15px]">
          <svg viewBox="0 0 16 16" fill="none">
            <circle cx="6" cy="6" r="4.500" fill={i === 0 ? '#bec8cd' : '#fafcff'} stroke="#3c464b" />
            <path d="M9 10L14 15" stroke="#141414" strokeWidth="2.600" />
            {mark}
          </svg>
        </button>
      ))}
    </div>
  </footer>
)

export default function App() {
  return (
    <div className="h-screen flex flex-col overflow-hidden bg-[#5b94ee] font-['Liberation_Sans',Arial,sans-serif] text-[8px] leading-[10px]">
      <TitleBar />
      <div className="flex-1 min-h-0 flex flex-col border-l-4 border-r-[3px] border-b-[3px] border-[#5089e6]">
        <Toolbar />
        <IndicatorRow
          className="h-[23px]"
          tags={<span className="absolute top-1 left-[3px] h-[14px] flex items-center bg-[#f0f0f0] border border-[#8ca0a5] font-bold text-[11px] text-[#141414]">59.127</span>}
        >
          <MomentumPanel />
        </IndicatorRow>
        <Divider />
        <IndicatorRow
          className="h-[22px]"
          tags={
            <>
              <span className="absolute top-0 left-[3px] h-[9px] overflow-hidden px-px flex items-center bg-[#f5f5ff] border border-b-0 border-[#8ca0a5] text-[#6432f0]">85.827</span>
              <span className="absolute top-[9px] left-[3px] h-[14px] flex items-center bg-[#f5f0f0] border border-[#8ca0a5] font-bold text-[11px] text-[#fa1437]">26.459</span>
            </>
          }
        >
          <TrendPanel />
        </IndicatorRow>
        <Divider />
        <main className="flex-1 min-h-0 flex bg-white">
          <div className="relative flex-1 min-w-0">
            <PriceChart />
            <Annotations />
          </div>
          <PriceAxis />
        </main>
        <TimeAxis />
        <BottomBar />
      </div>
    </div>
  )
}
